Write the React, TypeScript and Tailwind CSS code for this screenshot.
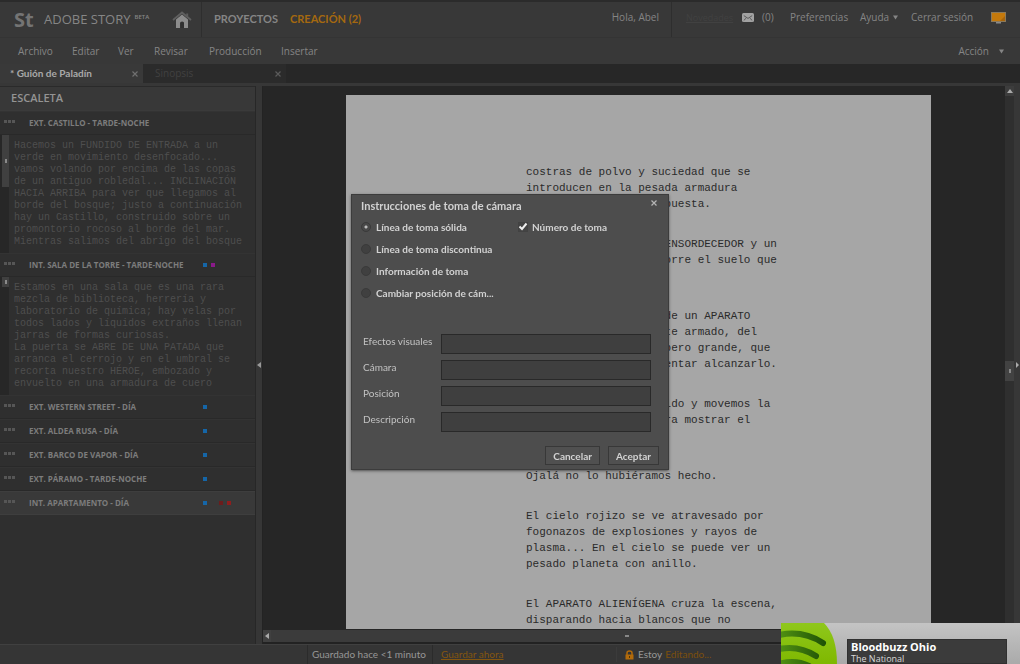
import { ReactNode } from 'react';

type Scene = {
  title: string;
  dots?: string[];
  text?: string[];
  active?: boolean;
  thumb?: 'long' | 'short';
};

const scenes: Scene[] = [
  {
    title: 'EXT. CASTILLO - TARDE-NOCHE',
    thumb: 'long',
    text: [
      'Hacemos un FUNDIDO DE ENTRADA a un',
      'verde en movimiento desenfocado...',
      'vamos volando por encima de las copas',
      'de un antiguo robledal... INCLINACIÓN',
      'HACIA ARRIBA para ver que llegamos al',
      'borde del bosque; justo a continuación',
      'hay un Castillo, construido sobre un',
      'promontorio rocoso al borde del mar.',
      'Mientras salimos del abrigo del bosque',
    ],
  },
  {
    title: 'INT. SALA DE LA TORRE - TARDE-NOCHE',
    dots: ['bg-[#1566a8]', 'bg-[#8a1a8a]'],
    thumb: 'short',
    text: [
      'Estamos en una sala que es una rara',
      'mezcla de biblioteca, herrería y',
      'laboratorio de química; hay velas por',
      'todos lados y líquidos extraños llenan',
      'jarras de formas curiosas.',
      'La puerta se ABRE DE UNA PATADA que',
      'arranca el cerrojo y en el umbral se',
      'recorta nuestro HÉROE, embozado y',
      'envuelto en una armadura de cuero',
    ],
  },
  { title: 'EXT. WESTERN STREET - DÍA', dots: ['bg-[#1566a8]'] },
  { title: 'EXT. ALDEA RUSA - DÍA', dots: ['bg-[#1566a8]'] },
  { title: 'EXT. BARCO DE VAPOR - DÍA', dots: ['bg-[#1566a8]'] },
  { title: 'EXT. PÁRAMO - TARDE-NOCHE', dots: ['bg-[#1566a8]'] },
  {
    title: 'INT. APARTAMENTO - DÍA',
    dots: ['bg-[#1566a8]', 'bg-transparent', 'bg-[#6b1c1c]', 'bg-[#8f1d1d]'],
    active: true,
  },
];

const script: string[][] = [
  [
    'costras de polvo y suciedad que se',
    'introducen en la pesada armadura',
    'que casi nadie lleva puesta.',
  ],
  [
    'Resuena un ESTRUENDO ENSORDECEDOR y un',
    'un fuerte temblor recorre el suelo que',
    'pisan.',
  ],
  [
    'Desde lo alto desciende un APARATO',
    'ALIENÍGENA, fuertemente armado, del',
    'tamaño de un camión, pero grande, que',
    'los demás deberán intentar alcanzarlo.',
  ],
  [
    'Seguimos el vuelo rápido y movemos la',
    'cámara hacia atrás para mostrar el',
    'horizonte.',
  ],
  ['Ojalá no lo hubiéramos hecho.'],
  [
    'El cielo rojizo se ve atravesado por',
    'fogonazos de explosiones y rayos de',
    'plasma... En el cielo se puede ver un',
    'pesado planeta con anillo.',
  ],
  [
    'El APARATO ALIENÍGENA cruza la escena,',
    'disparando hacia blancos que no',
  ],
];

const menus = [
  { name: 'Archivo', width: 'w-[54px]' },
  { name: 'Editar', width: 'w-[46px]' },
  { name: 'Ver', width: 'w-9' },
  { name: 'Revisar', width: 'w-[55px]' },
  { name: 'Producción', width: 'w-[72px]' },
  { name: 'Insertar', width: 'w-12' },
];

const shotTypes = [
  'Línea de toma sólida',
  'Línea de toma discontinua',
  'Información de toma',
  'Cambiar posición de cám...',
];

const fields = ['Efectos visuales', 'Cámara', 'Posición', 'Descripción'];

function Cross({ className }: { className: string }) {
  return (
    <svg viewBox="0 0 8 8" className={className} fill="none" stroke="currentColor" strokeWidth="1.2">
      <path d="M1.5 1.5 6.5 6.5M6.5 1.5 1.5 6.5" />
    </svg>
  );
}

function Caret() {
  return (
    <svg viewBox="0 0 6 5" className="h-[5px] w-[5px]" fill="currentColor">
      <path d="M0 0H6L3 5Z" />
    </svg>
  );
}

function HomeIcon() {
  return (
    <svg viewBox="0 0 20 18" className="h-[18px] w-5">
      <path d="M4 8.5 10 3.5 16 8.5V17H12V11.5H8.2V17H4Z" fill="#8c8c8c" />
      <path d="M8.2 17V12.2Q8.2 10.6 10.1 10.6T12 12.2V17Z" fill="#303030" />
      <path d="M1 9 10 1.5 19 9" fill="none" stroke="#5f5f5f" strokeWidth="1.8" />
      <path d="M14.2 2.5H16.2V6L14.2 4.4Z" fill="#5c5c5c" />
    </svg>
  );
}

function MailIcon() {
  return (
    <svg viewBox="0 0 12 9" className="h-[9px] w-3">
      <rect width="12" height="9" rx="1.5" fill="#a2a2a2" />
      <path d="M1.8 2.6 6 5.4 10.2 2.6M1.8 7.4 4.3 5M10.2 7.4 7.7 5" fill="none" stroke="#5a5a5a" strokeWidth="1" />
    </svg>
  );
}

function ScreenIcon() {
  return (
    <svg viewBox="0 0 15 12" className="h-3 w-[15px]">
      <rect x="0.5" y="0.5" width="14" height="9" fill="#c4790c" stroke="#8b7a5c" />
      <path d="M9 9 14 4V9Z" fill="#a7640a" />
      <path d="M5 10H10V11.5H5Z" fill="#8a8a8a" />
    </svg>
  );
}

function Header() {
  return (
    <header className="shrink-0 border-t-2 border-[#2b2b2b] bg-[#383838] text-[#858585]">
      <div className="flex h-9 items-stretch border-b border-[#343434]">
        <div className="flex w-[202px] items-center border-r border-[#2e2e2e] pl-3.5">
          <span className="w-[30px] text-[20px] font-bold leading-6 text-[#747474]">St</span>
          <span className="text-[13px] text-[#868686]">ADOBE STORY</span>
          <sup className="ml-1 text-[6px] font-semibold">BETA</sup>
          <button aria-label="Inicio" className="ml-auto mr-[9px]">
            <HomeIcon />
          </button>
        </div>
        <nav className="flex items-center gap-3 pl-3 font-['Lato','Open_Sans',sans-serif] text-[11px] font-bold">
          <a href="#proyectos">PROYECTOS</a>
          <a href="#creacion" className="text-[#a5690f]">CREACIÓN (2)</a>
        </nav>
        <div className="ml-auto flex items-stretch text-[10px]">
          <span className="flex items-center border-r border-[#2e2e2e] pb-1 pr-3">Hola, Abel</span>
          <div className="flex items-center pb-1 pr-3.5">
            <a href="#novedades" className="w-[70px] pl-3.5 text-[9px] text-[#414141] underline">Novedades</a>
            <button className="flex w-12 items-center gap-2">
              <MailIcon />
              (0)
            </button>
            <a href="#preferencias" className="w-[70px]">Preferencias</a>
            <button className="flex w-[51px] items-center gap-1">
              Ayuda
              <Caret />
            </button>
            <a href="#salir" className="w-20">Cerrar sesión</a>
            <button aria-label="Pantalla completa">
              <ScreenIcon />
            </button>
          </div>
        </div>
      </div>
      <div className="flex h-[26px] items-center pl-[18px] pr-4 text-[10px]">
        <nav className="flex">
          {menus.map((m) => (
            <button key={m.name} className={`${m.width} text-left`}>
              {m.name}
            </button>
          ))}
        </nav>
        <button className="ml-auto flex items-center gap-2.5">
          Acción
          <Caret />
        </button>
      </div>
    </header>
  );
}

function Tabs() {
  return (
    <div className="flex h-[22px] shrink-0 border-b-[3px] border-[#373737] bg-[#272727] text-[10px]">
      <div className="flex w-[143px] items-center justify-between bg-[#393939] pl-2.5 pr-1 font-['Lato','Open_Sans',sans-serif] font-bold text-[#a9a9a9]">
        <button>* Guión de Paladín</button>
        <button aria-label="Cerrar Guión de Paladín" className="text-[#707070]">
          <Cross className="size-2" />
        </button>
      </div>
      <div className="flex w-[143px] items-center justify-between bg-[#2b2b2b] pl-3 pr-1 text-[#414141]">
        <button>Sinopsis</button>
        <button aria-label="Cerrar Sinopsis" className="text-[#5b5b5b]">
          <Cross className="size-2" />
        </button>
      </div>
    </div>
  );
}

function SceneItem({ scene }: { scene: Scene }) {
  return (
    <li>
      <div
        className={`flex h-6 items-center border-y text-[8px] font-bold text-[#7c7c7c] ${
          scene.active ? 'border-[#3e3e3e] bg-[#393939]' : 'border-t-[#333] border-b-[#292929]'
        }`}
      >
        <span className="flex w-[29px] gap-px pb-1 pl-1">
          {[0, 1, 2].map((i) => (
            <span key={i} className="size-[3px] bg-[#565656]" />
          ))}
        </span>
        <button className="w-[174px] whitespace-nowrap text-left">{scene.title}</button>
        <span className="flex gap-1">
          {scene.dots?.map((color, i) => (
            <span key={i} className={`size-1 ${color}`} />
          ))}
        </span>
      </div>
      {scene.text && (
        <div className="flex h-[118px]">
          <div className="mr-[5px] w-[9px] bg-[#272727] pl-0.5">
            <div
              className={`grid w-[7px] place-items-center bg-[#404040] ${
                scene.thumb === 'long' ? 'h-[52px]' : 'h-2.5'
              }`}
            >
              <span className="h-1 w-0.5 bg-[#8a8a8a]" />
            </div>
          </div>
          <div className="overflow-hidden whitespace-pre pt-[5px] font-['Liberation_Mono',monospace] text-[10px] leading-3 text-[#4e4e4e]">
            {scene.text.map((line) => (
              <div key={line}>{line}</div>
            ))}
          </div>
        </div>
      )}
    </li>
  );
}

function Outline() {
  return (
    <aside className="w-64 shrink-0 overflow-hidden border-r border-[#272727] bg-[#2f2f2f]">
      <h2 className="flex h-[25px] items-center border-y border-t-[#2a2a2a] border-b-[#3a3a3a] bg-[#383838] pl-[11px] text-[11px] font-semibold text-[#949494]">
        ESCALETA
      </h2>
      <ul>
        {scenes.map((s) => (
          <SceneItem key={s.title} scene={s} />
        ))}
      </ul>
    </aside>
  );
}

function Splitter() {
  return (
    <div className="grid w-[7px] shrink-0 place-items-center border-r border-[#232323] bg-[#363636]">
      <svg viewBox="0 0 4 6" className="h-1.5 w-1" fill="#999">
        <path d="M4 0V6L0 3Z" />
      </svg>
    </div>
  );
}

function Editor() {
  return (
    <main className="flex min-w-0 flex-1 flex-col bg-[#262626]">
      <div className="flex min-h-0 flex-1">
        <div className="flex min-w-0 flex-1 pl-[83px] pr-[74px] pt-[9px]">
          <article className="flex-1 space-y-6 overflow-hidden whitespace-pre bg-[#a6a6a6] pl-[180px] pt-[69px] font-['Liberation_Mono',monospace] text-[11px] leading-4 text-[#2a2a2a]">
            {script.map((paragraph) => (
              <p key={paragraph[0]}>{paragraph.join('\n')}</p>
            ))}
          </article>
        </div>
        <div className="flex w-[9px] flex-col bg-[#2f2f2f]">
          <div className="grid h-2.5 place-items-center bg-[#3d3d3d]">
            <svg viewBox="0 0 6 4" className="h-1 w-1.5" fill="#aaa">
              <path d="M0 4H6L3 0Z" />
            </svg>
          </div>
          <div className="h-[265px]" />
          <div className="grid h-5 place-items-center bg-[#424242]">
            <span className="h-1 w-0.5 bg-[#888]" />
          </div>
        </div>
      </div>
      <div className="flex h-[13px] shrink-0 items-stretch border-t border-[#262626] bg-[#3b3b3b] pr-8">
        <span className="grid w-2 place-items-center bg-[#404040]">
          <svg viewBox="0 0 4 6" className="h-1.5 w-1" fill="#aaa">
            <path d="M4 0V6L0 3Z" />
          </svg>
        </span>
        <span className="mx-auto mt-[5px] h-0.5 w-1 bg-[#888]" />
      </div>
      <div className="h-0.5 shrink-0 bg-[#222]" />
    </main>
  );
}

function StatusBar() {
  return (
    <footer className="flex h-5 shrink-0 items-center border-t border-[#404040] bg-[#353535] pl-[307px] font-['Lato','Open_Sans',sans-serif] text-[10px] text-[#979797]">
      <span className="flex h-full w-[126px] items-center whitespace-nowrap border-x border-[#2b2b2b] pl-1">
        Guardado hace &lt;1 minuto
      </span>
      <a href="#guardar" className="w-[183px] pl-2 text-[#84560f] underline">Guardar ahora</a>
      <span className="flex items-center border-l border-[#3b3b3b] pl-2">
        <svg viewBox="0 0 9 10" className="mr-1 h-2.5 w-[9px]">
          <path d="M0.5 4.5H8.5V9.5H0.5Z" fill="#b36b0a" />
          <path d="M2 5V3Q2 1 4.5 1T7 3V5" fill="none" stroke="#b36b0a" strokeWidth="1.5" />
          <path d="M4 6H5V8H4Z" fill="#533506" />
        </svg>
        Estoy
        <button className="ml-[3px] text-[#7c4f0c]">Editando...</button>
      </span>
    </footer>
  );
}

function Field({ name }: { name: string }) {
  return (
    <label className="flex h-5 justify-between whitespace-nowrap text-[10px] text-[#c2c2c2]">
      <span className="leading-[14px]">{name}</span>
      <input type="text" className="h-5 w-[210px] border border-[#292929] bg-[#3f3f3f] px-1 outline-none" />
    </label>
  );
}

function DialogButton({ children }: { children: ReactNode }) {
  return (
    <button type="button" className="h-[19px] border border-[#383838] bg-[#505050] px-[7px] text-[10px] font-bold leading-4">
      {children}
    </button>
  );
}

function ShotDialog() {
  return (
    <div className="fixed inset-0 grid place-items-center">
      <form
        role="dialog"
        aria-labelledby="dialog-title"
        className="w-[318px] border border-[#3c3c3c] bg-[#4d4d4d] px-[9px] pb-1 pt-[3px] font-['Lato','Open_Sans',sans-serif] text-[#d2d2d2] shadow-sm shadow-black/40"
      >
        <div className="flex h-[18px] items-start justify-between">
          <h1 id="dialog-title" className="text-[11px] font-bold leading-4">
            Instrucciones de toma de cámara
          </h1>
          <button type="button" aria-label="Cerrar" className="mr-px mt-px text-[#b5b5b5]">
            <Cross className="size-2" />
          </button>
        </div>
        <div className="flex text-[10px] font-bold">
          <fieldset className="w-[157px]">
            {shotTypes.map((t, i) => (
              <label key={t} className="flex h-[22px] items-center whitespace-nowrap">
                <input
                  type="radio"
                  name="shot"
                  defaultChecked={i === 0}
                  className="mr-[5px] size-2.5 shrink-0 appearance-none rounded-full border border-[#3a3a3a] bg-[#404040] checked:bg-[radial-gradient(circle,#bbb_1px,#484848_2px)]"
                />
                {t}
              </label>
            ))}
          </fieldset>
          <label className="flex h-[22px] items-center whitespace-nowrap">
            <span className="mr-1 grid">
              <input
                type="checkbox"
                defaultChecked
                className="peer col-start-1 row-start-1 size-2.5 appearance-none border border-[#424242] bg-[#444]"
              />
              <svg
                viewBox="0 0 10 10"
                className="pointer-events-none invisible col-start-1 row-start-1 size-2.5 peer-checked:visible"
                fill="none"
                stroke="#eee"
                strokeWidth="2"
              >
                <path d="M1.5 4.5 4 7 8.5 1.5" />
              </svg>
            </span>
            Número de toma
          </label>
        </div>
        <div className="mt-[30px] flex flex-col gap-1.5 pl-0.5 pr-2">
          {fields.map((f) => (
            <Field key={f} name={f} />
          ))}
        </div>
        <div className="mt-3.5 flex justify-end gap-2">
          <DialogButton>Cancelar</DialogButton>
          <DialogButton>Aceptar</DialogButton>
        </div>
      </form>
    </div>
  );
}

function Notification() {
  return (
    <div className="fixed bottom-0 right-0 flex h-[41px] w-[239px] overflow-hidden bg-linear-to-b from-[#c4c4c4] to-[#aaaaaa]">
      <svg viewBox="0 0 56 41" className="h-[41px] w-14 shrink-0">
        <defs>
          <linearGradient id="leaf" x1="0" y1="0" x2="0" y2="1">
            <stop offset="0" stopColor="#8fc71c" />
            <stop offset="1" stopColor="#7fb800" />
          </linearGradient>
          <linearGradient id="streak" gradientUnits="userSpaceOnUse" x1="0" y1="0" x2="44" y2="0">
            <stop offset="0" stopColor="#4f8f12" />
            <stop offset="1" stopColor="#1f5206" />
          </linearGradient>
        </defs>
        <path d="M0 0H43Q56 13 56 41H0Z" fill="url(#leaf)" />
        <g fill="none" strokeLinecap="round" strokeWidth="6" stroke="url(#streak)">
          <path d="M-2 12Q22 7 42 20" />
          <path d="M-2 26Q18 22 35 33" />
          <path d="M-2 41Q14 36 28 43" />
        </g>
      </svg>
      <div className="ml-2.5 mr-[13px] mt-4 min-w-0 flex-1 border border-[#303030] bg-[#3b3b3b] pl-[3px] text-[#d8d8d8]">
        <div className="text-[11px] font-bold leading-[13px] text-white">Bloodbuzz Ohio</div>
        <div className="text-[9px] leading-3">The National</div>
      </div>
    </div>
  );
}

export default function App() {
  return (
    <div className="flex h-screen flex-col overflow-hidden bg-[#2f2f2f] font-['Open_Sans',sans-serif]">
      <Header />
      <Tabs />
      <div className="flex min-h-0 flex-1">
        <Outline />
        <Splitter />
        <Editor />
        <div className="grid w-1.5 shrink-0 place-items-center bg-[#373737]">
          <svg viewBox="0 0 3 6" className="h-1.5 w-[3px]" fill="#aaa">
            <path d="M0 0V6L3 3Z" />
          </svg>
        </div>
      </div>
      <StatusBar />
      <ShotDialog />
      <Notification />
    </div>
  );
}
